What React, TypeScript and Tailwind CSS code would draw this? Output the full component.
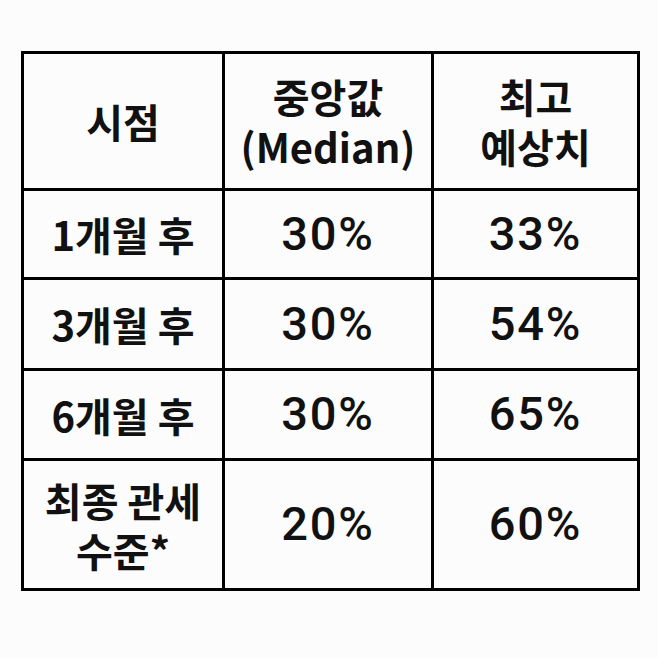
const rows = [
  { label: ['1개월 후'], median: '30%', max: '33%', h: 'h-[89px]' },
  { label: ['3개월 후'], median: '30%', max: '54%', h: 'h-[91px]' },
  { label: ['6개월 후'], median: '30%', max: '65%', h: 'h-[90px]' },
  { label: ['최종 관세', '수준*'], median: '20%', max: '60%', h: 'h-[130px]' },
];

const head = "border-[3px] border-black text-[40px] font-bold text-center align-middle leading-[1.25] font-['Noto_Sans_CJK_KR',sans-serif]";
const num = "border-[3px] border-black text-[47px] font-medium tracking-[0.04em] text-center align-middle font-['Roboto',sans-serif]";

export default function App() {
  return (
    <div className="w-[658px] h-[658px] bg-[#fcfcfc] pt-[51px] pl-[21px] text-[#111] font-['Noto_Sans_CJK_KR',sans-serif]">
      <table className="table-fixed border-collapse w-[616px]">
        <colgroup>
          <col className="w-[201px]" />
          <col className="w-[209px]" />
          <col className="w-[206px]" />
        </colgroup>
        <thead>
          <tr className="h-[137px]">
            <th className={head}>시점</th>
            <th className={head}>
              <div>중앙값</div>
              <div>(Median)</div>
            </th>
            <th className={head}>
              <div>최고</div>
              <div>예상치</div>
            </th>
          </tr>
        </thead>
        <tbody>
          {rows.map((r) => (
            <tr key={r.median + r.max} className={r.h}>
              <td className={head + ' leading-[1.3]'}>
                {r.label.map((l) => (
                  <div key={l}>{l}</div>
                ))}
              </td>
              <td className={num}>{r.median}</td>
              <td className={num}>{r.max}</td>
            </tr>
          ))}
        </tbody>
      </table>
    </div>
  );
}
